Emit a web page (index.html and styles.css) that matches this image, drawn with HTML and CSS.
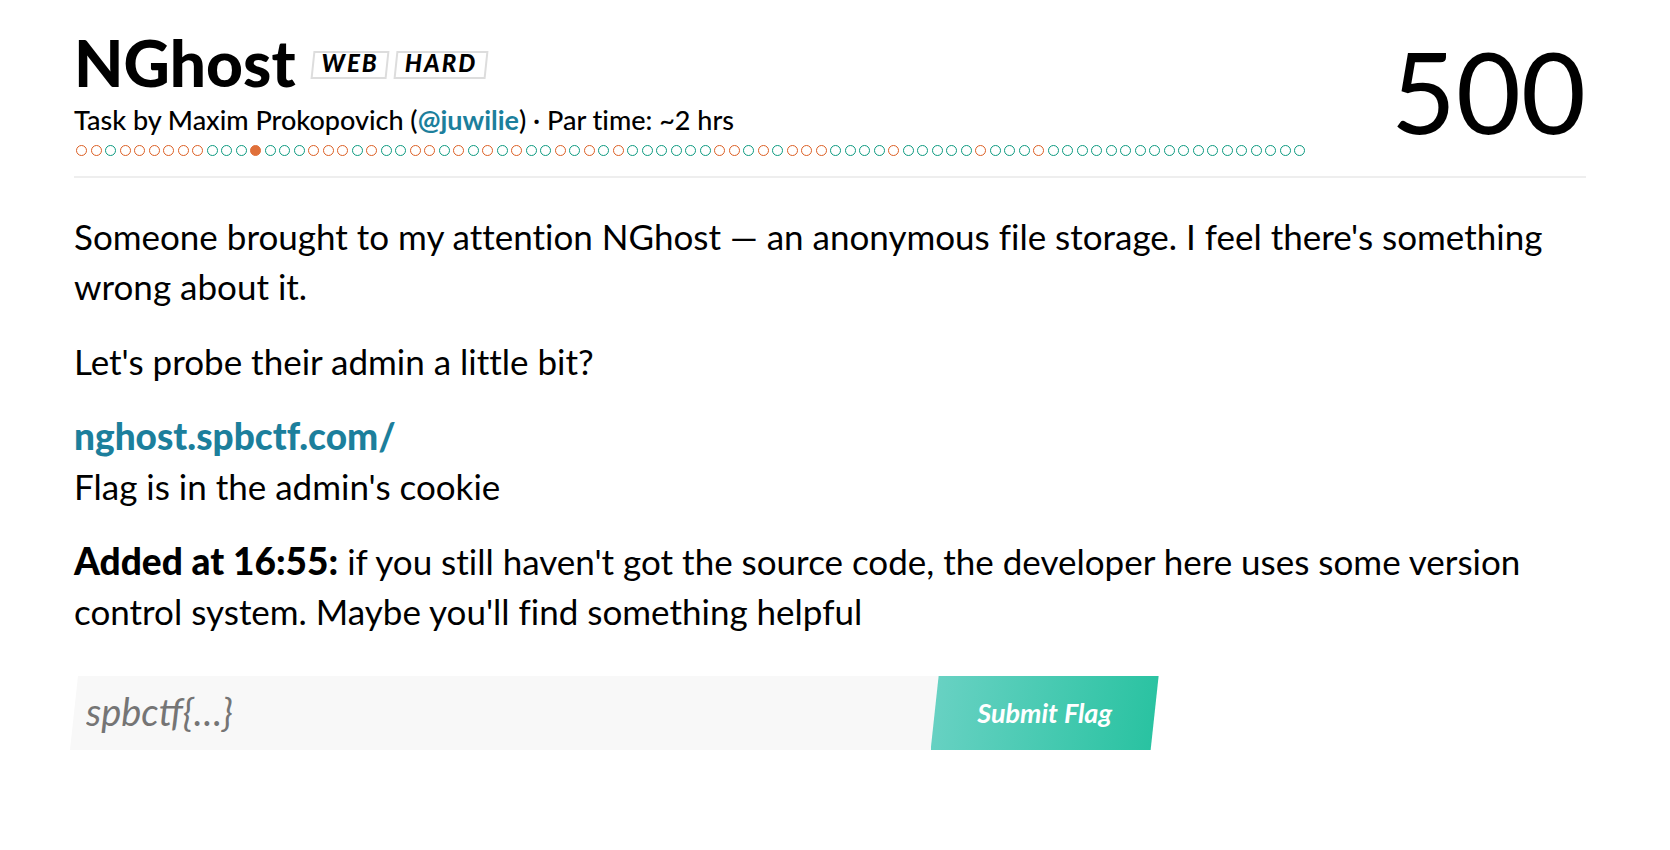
FILE: index.html
```html
<!DOCTYPE html>
<html lang="en">
<head>
<meta charset="utf-8">
<title>NGhost</title>
<link rel="stylesheet" href="styles.css">
</head>
<body>
<main class="task">
  <header class="task-header">
    <div class="summary">
      <div class="title-row">
        <h1 class="title">NGhost</h1>
        <ul class="tags"><li class="tag">WEB</li><li class="tag">HARD</li></ul>
      </div>
      <p class="meta">Task by Maxim Prokopovich (<a href="#">@juwilie</a>) · Par time: ~2 hrs</p>
      <div class="attempts" id="attempts"></div>
    </div>
    <div class="points">500</div>
  </header>
  <section class="description">
    <p>Someone brought to my attention NGhost — an anonymous file storage. I feel there's something wrong about it.</p>
    <p>Let's probe their admin a little bit?</p>
    <p><a class="task-link" href="#">nghost.spbctf.com/</a><br>Flag is in the admin's cookie</p>
    <p><strong>Added at 16:55:</strong> if you still haven't got the source code, the developer here uses some version control system. Maybe you'll find something helpful</p>
  </section>
  <form class="flag-form">
    <input class="flag-input" type="text" aria-label="Flag" placeholder="spbctf{…}">
    <button class="flag-submit" type="submit">Submit Flag</button>
  </form>
</main>
<script src="script.js"></script>
</body>
</html>
```

FILE: styles.css
```css
* {
  box-sizing: border-box;
}

body {
  margin: 0;
  background: #fff;
  color: #000;
  font-family: Lato, "Open Sans", sans-serif;
  font-variant-ligatures: none;
}

a {
  color: #1c7f9c;
  font-weight: 700;
  text-decoration: none;
}

.task {
  padding: 30px 84px 64px 74px;
}

.task-header {
  display: flex;
  justify-content: space-between;
  align-items: flex-start;
  border-bottom: 2px solid #eee;
  padding-bottom: 20px;
}

.summary {
  flex: 0 1 1231px;
  min-width: 0;
}

.title-row {
  display: flex;
  align-items: center;
  gap: 16px;
}

.title {
  margin: 0;
  font-size: 64px;
  line-height: 66px;
  font-weight: 900;
}

.tags {
  display: flex;
  gap: 7px;
  margin: 4px 0 0;
  padding: 0;
  list-style: none;
}

.tag {
  position: relative;
  padding: 0 9px 4px 10px;
  font-size: 24px;
  line-height: 24px;
  font-weight: 900;
  font-style: italic;
  letter-spacing: 2px;
}

.tag::before {
  content: "";
  position: absolute;
  inset: 0;
  border: 2px solid #ddd;
  transform: skewX(-6deg);
}

.meta {
  margin: 0;
  padding-top: 4px;
  font-size: 27px;
  line-height: 39px;
  font-weight: 500;
}

.attempts {
  display: flex;
  justify-content: space-between;
  padding: 6px 0 0 2px;
}

.dot {
  width: 11px;
  height: 11px;
  border: 1px solid #0c9a80;
  border-radius: 50%;
}

.dot-miss {
  border-color: #dc5f24;
}

.dot-mine {
  border-color: #e0703a;
  background: #e0703a;
}

.points {
  font-size: 112px;
  line-height: 122px;
}

.description {
  padding-top: 33px;
  font-size: 35px;
  line-height: 50px;
}

.description p {
  margin: 0 0 25px;
}

.description strong,
.task-link {
  font-size: 37px;
  line-height: 1;
  font-weight: 900;
}

.flag-form {
  display: flex;
  width: 72%;
  margin: 40px 0 0 -4px;
}

.flag-input {
  flex: 1;
  min-width: 0;
  height: 74px;
  padding: 0 16px 4px;
  border: 0;
  background: #f8f8f8;
  clip-path: polygon(8px 0, 100% 0, 100% 100%, 0 100%);
  font: italic 38px Lato, sans-serif;
}

.flag-input::placeholder {
  color: #757575;
  opacity: 1;
}

.flag-submit {
  flex: 0 0 228px;
  height: 74px;
  margin-left: -8px;
  padding: 0 0 2px;
  border: 0;
  background: linear-gradient(100deg, #6ad2c4, #27c2a0);
  clip-path: polygon(8px 0, 100% 0, calc(100% - 8px) 100%, 0 100%);
  color: #fff;
  font: italic 700 27px Lato, sans-serif;
}
```

FILE: script.js
```js
// o = wrong attempt, g = solved, m = your own attempt
const attempts =
  "oogoooooogggmgggooogoggoogog" +
  "ogoggogogoggggggoogogooogggg" +
  "ogggggogggogggggggggggggggggg";
const row = document.getElementById("attempts");
for (const kind of attempts) {
  const dot = document.createElement("span");
  dot.className = "dot" + (kind === "o" ? " dot-miss" : kind === "m" ? " dot-mine" : "");
  row.append(dot);
}
```
